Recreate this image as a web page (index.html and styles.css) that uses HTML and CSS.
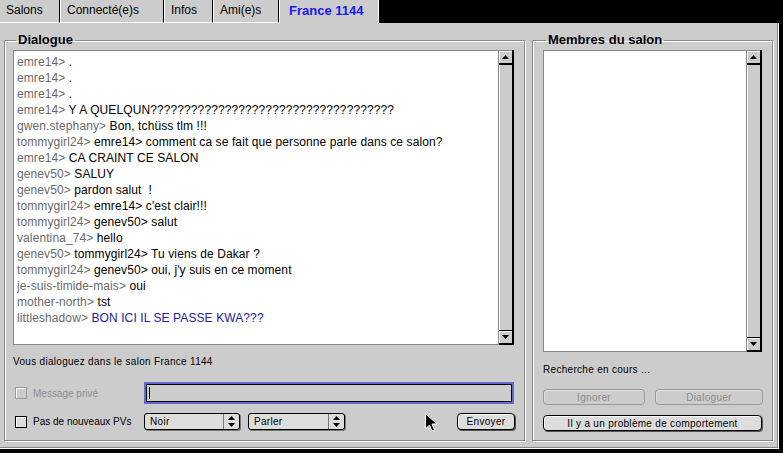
FILE: index.html
```html
<!DOCTYPE html>
<html lang="fr">
<head>
  <meta charset="UTF-8">
  <title>France 1144</title>
  <link rel="stylesheet" href="styles.css">
</head>
<body>
  <div class="window">
    <div class="tabs">
      <span class="tab tab-salons">Salons</span>
      <span class="tab tab-connect">Connecté(e)s</span>
      <span class="tab tab-infos">Infos</span>
      <span class="tab tab-amis">Ami(e)s</span>
      <span class="tab tab-active">France 1144</span>
    </div>
    <div class="panel">
      <fieldset class="group dialog">
        <legend>Dialogue</legend>
        <div class="listbox chat">
          <div class="lines">
            <div><span class="nick">emre14&gt;</span> .</div>
            <div><span class="nick">emre14&gt;</span> .</div>
            <div><span class="nick">emre14&gt;</span> .</div>
            <div><span class="nick">emre14&gt;</span> Y A QUELQUN????????????????????????????????????</div>
            <div><span class="nick">gwen.stephany&gt;</span> Bon, tchüss tlm !!!</div>
            <div><span class="nick">tommygirl24&gt;</span> emre14&gt; comment ca se fait que personne parle dans ce salon?</div>
            <div><span class="nick">emre14&gt;</span> CA CRAINT CE SALON</div>
            <div><span class="nick">genev50&gt;</span> SALUY</div>
            <div><span class="nick">genev50&gt;</span> pardon salut&nbsp; !</div>
            <div><span class="nick">tommygirl24&gt;</span> emre14&gt; c'est clair!!!</div>
            <div><span class="nick">tommygirl24&gt;</span> genev50&gt; salut</div>
            <div><span class="nick">valentina_74&gt;</span> hello</div>
            <div><span class="nick">genev50&gt;</span> tommygirl24&gt; Tu viens de Dakar ?</div>
            <div><span class="nick">tommygirl24&gt;</span> genev50&gt; oui, j'y suis en ce moment</div>
            <div><span class="nick">je-suis-timide-mais&gt;</span> oui</div>
            <div><span class="nick">mother-north&gt;</span> tst</div>
            <div><span class="nick">littleshadow&gt;</span> <span class="me">BON ICI IL SE PASSE KWA???</span></div>
          </div>
          <div class="scrollbar">
            <span class="sb-btn sb-up"><svg width="7" height="4" viewBox="0 0 7 4"><path d="M3.5 0L7 4H0z"/></svg></span>
            <span class="sb-track"></span>
            <span class="sb-btn sb-down"><svg width="7" height="4" viewBox="0 0 7 4"><path d="M0 0H7L3.5 4z"/></svg></span>
          </div>
        </div>
        <p class="status">Vous dialoguez dans le salon France 1144</p>
        <div class="row">
          <label class="opt disabled"><span class="check"></span>Message privé</label>
          <div class="field"><span class="caret"></span></div>
        </div>
        <div class="row row-send">
          <label class="opt"><span class="check"></span>Pas de nouveaux PVs</label>
          <div class="popup popup-color">
            <span class="popup-text">Noir</span>
            <span class="popup-arrows"><svg width="7" height="11" viewBox="0 0 7 11"><path d="M3.5 0L7 4H0zM0 7H7L3.5 11z"/></svg></span>
          </div>
          <div class="popup popup-mode">
            <span class="popup-text">Parler</span>
            <span class="popup-arrows"><svg width="7" height="11" viewBox="0 0 7 11"><path d="M3.5 0L7 4H0zM0 7H7L3.5 11z"/></svg></span>
          </div>
          <button class="btn btn-send">Envoyer</button>
        </div>
      </fieldset>

      <fieldset class="group members">
        <legend>Membres du salon</legend>
        <div class="listbox people">
          <div class="lines"></div>
          <div class="scrollbar">
            <span class="sb-btn sb-up"><svg width="7" height="4" viewBox="0 0 7 4"><path d="M3.5 0L7 4H0z"/></svg></span>
            <span class="sb-track"></span>
            <span class="sb-btn sb-down"><svg width="7" height="4" viewBox="0 0 7 4"><path d="M0 0H7L3.5 4z"/></svg></span>
          </div>
        </div>
        <p class="status">Recherche en cours ...</p>
        <div class="member-actions">
          <button class="btn btn-ignore" disabled>Ignorer</button>
          <button class="btn btn-talk" disabled>Dialoguer</button>
        </div>
        <button class="btn btn-report">Il y a un problème de comportement</button>
      </fieldset>
    </div>
    <svg class="pointer" width="12" height="19" viewBox="0 0 12 19"><path d="M0.5 0.5V16L4.5 12L7 18L9.5 17L7 11H12z" fill="#000" stroke="#fff" stroke-width="1"/></svg>
  </div>
</body>
</html>
```

FILE: styles.css
```css
* { box-sizing: border-box; }
body {
  margin: 0;
  background: #000;
  font-family: "Liberation Sans", Arial, sans-serif;
}
.window {
  position: relative;
  width: 783px; height: 453px;
  background: #000;
}

/* tabs */
.tabs {
  display: flex;
  height: 23px;
}
.tab {
  height: 23px;
  background: #ccc;
  border-left: 1px solid #fff;
  border-right: 1px solid #000;
  border-bottom: 1px solid #fff;
  font-size: 12px;
  line-height: 21px;
  padding-left: 6px;
  color: #000;
}
.tab-salons { width: 60px; border-left: 0; }
.tab-connect { width: 104px; }
.tab-infos { width: 49px; }
.tab-amis { width: 66px; }
.tab-active {
  width: 100px;
  border-right-color: #fff;
  border-bottom: 0;
  padding-left: 9px;
  font-weight: bold;
  font-size: 13px;
  color: #1818f4;
}

/* main panel */
.panel {
  display: flex;
  gap: 7px;
  width: 779px; height: 426px;
  padding: 9px 0 0 4px;
  background: #ccc;
  box-shadow: inset -1px -1px 0 #fff, inset -2px -2px 0 #888;
}
.group {
  margin: 0;
  height: 409px;
  border: 1px solid #8a8a8a;
  box-shadow: inset 1px 1px 0 #fff, 1px 1px 0 #fff;
  padding: 2px 8px 0 8px;
  min-width: 0;
}
.group legend {
  font-weight: bold;
  font-size: 13px;
  line-height: 16px;
  padding: 0 2px;
  margin-left: 3px;
}
.dialog { width: 521px; }
.members { width: 241px; padding: 2px 9px 0 10px; }

/* list boxes */
.listbox {
  display: flex;
  background: #fff;
  border-top: 1px solid #888;
  border-left: 1px solid #888;
  border-bottom: 1px solid #888;
}
.chat { width: 501px; height: 295px; }
.people { width: 219px; height: 302px; }
.lines {
  flex: 1;
  padding: 3px 0 0 3px;
  font-size: 12px;
  line-height: 16px;
  letter-spacing: .1px;
  color: #000;
  white-space: nowrap;
  overflow: hidden;
}
.nick { color: #6a6a6a; }
.me { color: #22229c; }

.scrollbar {
  display: flex;
  flex-direction: column;
  width: 16px;
  background: #ccc;
  border-left: 1px solid #888;
  border-right: 2px solid #000;
  margin-top: -1px;
  margin-bottom: -1px;
}
.sb-btn {
  display: flex;
  align-items: center;
  justify-content: center;
  height: 15px;
  background: #ccc;
  box-shadow: inset 1px 1px 0 #fff;
}
.sb-up { border-bottom: 2px solid #000; border-top: 1px solid #888; }
.sb-down { border-top: 1px solid #000; border-bottom: 2px solid #000; }
.sb-track {
  flex: 1;
  background: #ccc;
  box-shadow: inset 1px 0 0 #fff;
}

.status {
  margin: 10px 0 0;
  font-size: 10px;
  line-height: 14px;
  letter-spacing: .3px;
}
.members .status { margin-top: 11px; }

/* form rows */
.row {
  display: flex;
  align-items: center;
  margin-top: 13px;
  height: 22px;
  font-size: 10px;
}
.row-send {
  margin-top: 9px;
  height: 17px;
}
.opt {
  display: flex;
  align-items: center;
  width: 131px;
  padding-left: 2px;
}
.check {
  width: 12px; height: 12px;
  margin-right: 6px;
  border: 1px solid #000;
  background: #ddd;
  box-shadow: inset 1px 1px 0 #fff;
}
.disabled { color: #8c8c8c; }
.disabled .check { border-color: #9a9a9a; background: #ccc; }

.field {
  display: flex;
  align-items: center;
  width: 370px; height: 22px;
  border: 2px solid #6666cc;
  box-shadow: inset 0 0 0 1px #000;
  background: #ccc;
  padding-left: 3px;
}
.caret { width: 1px; height: 12px; background: #000; }

.popup {
  display: flex;
  height: 17px;
  border: 1px solid #000;
  border-radius: 3px;
  background: #ddd;
  box-shadow: 1px 1px 0 #777;
  letter-spacing: .3px;
}
.popup-color { width: 96px; }
.popup-mode { width: 97px; margin-left: 8px; }
.popup-text {
  flex: 1;
  padding-left: 5px;
  line-height: 15px;
}
.popup-arrows {
  display: flex;
  align-items: center;
  justify-content: center;
  width: 16px;
  border-left: 1px solid #777;
}

.btn {
  height: 17px;
  padding: 0;
  border: 1px solid #000;
  border-radius: 4px;
  background: #ddd;
  box-shadow: inset 1px 1px 0 #fff, 1px 1px 0 #555;
  font-family: "Liberation Sans", Arial, sans-serif;
  font-size: 10px;
  letter-spacing: .3px;
  color: #000;
}
.btn:disabled {
  border-color: #9a9a9a;
  background: #ccc;
  color: #8c8c8c;
  box-shadow: inset 1px 1px 0 #ddd;
}
.btn-send { width: 58px; margin-left: auto; margin-right: 1px; }

.member-actions {
  display: flex;
  justify-content: space-between;
  margin-top: 12px;
}
.btn-ignore { width: 102px; height: 16px; }
.btn-talk { width: 108px; height: 16px; }
.btn-report { display: block; width: 219px; height: 16px; margin-top: 10px; }

.pointer {
  position: absolute;
  left: 425px; top: 413px;
}
```
